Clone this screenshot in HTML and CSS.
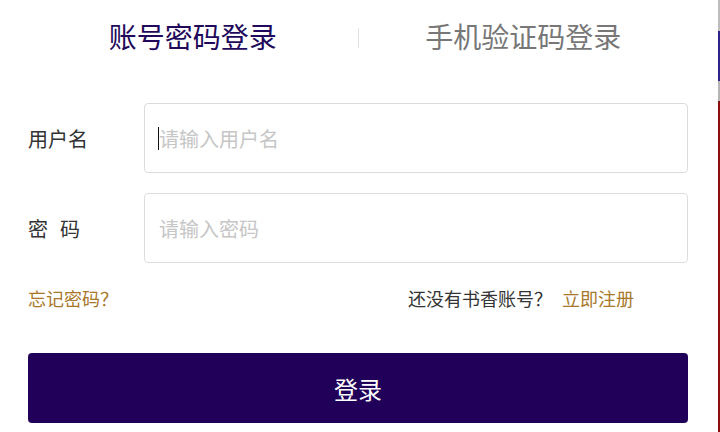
FILE: index.html
```html
<!DOCTYPE html>
<html lang="zh-CN">
<head>
<meta charset="utf-8">
<title>登录</title>
<link rel="stylesheet" href="styles.css">
</head>
<body>
<div class="page">
  <div class="main">
    <div class="tabs">
      <div class="tab tab-active">账号密码登录</div>
      <div class="tab-sep"></div>
      <div class="tab">手机验证码登录</div>
    </div>
    <div class="row">
      <label class="label">用户名</label>
      <div class="field">
        <input class="input" type="text" placeholder="请输入用户名">
        <span class="caret"></span>
      </div>
    </div>
    <div class="row">
      <label class="label"><span class="spaced">密</span>码</label>
      <div class="field">
        <input class="input" type="password" placeholder="请输入密码">
      </div>
    </div>
    <div class="links">
      <a class="link" href="#">忘记密码？</a>
      <div class="register">
        <span class="hint">还没有书香账号？</span>
        <a class="link" href="#">立即注册</a>
      </div>
    </div>
    <button class="submit" type="button">登录</button>
  </div>
  <div class="edge">
    <div class="edge-gray"></div>
    <div class="edge-blue"></div>
    <div class="edge-gray2"></div>
    <div class="edge-red"></div>
  </div>
</div>
</body>
</html>
```
FILE: styles.css
```css
* { box-sizing: border-box; }
html, body { margin: 0; padding: 0; background: #fff; }
body {
  font-family: "Noto Sans CJK SC", "Noto Sans", sans-serif;
  color: #333;
}
.page {
  display: flex;
  width: 720px;
  height: 432px;
  overflow: hidden;
}
.main {
  flex: 1;
  padding: 0 30px 0 28px;
}
.tabs {
  display: flex;
  align-items: center;
  height: 76px;
  padding-bottom: 4px;
}
.tab {
  flex: 1;
  text-align: center;
  font-size: 28px;
  line-height: 40px;
  color: #777;
}
.tab-active { color: #21085a; }
.tab-sep {
  width: 1px;
  height: 20px;
  margin-top: 4px;
  background: #e3e3e3;
}
.row {
  display: flex;
  align-items: center;
  height: 70px;
  margin-top: 27px;
}
.row + .row { margin-top: 20px; }
.label {
  width: 116px;
  font-size: 20px;
  color: #333;
}
.spaced {
  display: inline-block;
  margin-right: 12px;
}
.field {
  position: relative;
  flex: 1;
  height: 70px;
}
.input {
  width: 100%;
  height: 100%;
  border: 1px solid #dcdcdc;
  border-radius: 4px;
  padding: 0 14px;
  font-family: inherit;
  font-size: 20px;
  color: #333;
  outline: none;
  background: #fff;
}
.input::placeholder { color: #c6c6c6; }
.caret {
  position: absolute;
  left: 14px;
  top: 24px;
  width: 1px;
  height: 23px;
  background: #111;
}
.links {
  display: flex;
  align-items: center;
  justify-content: space-between;
  height: 30px;
  margin-top: 20px;
  font-size: 18px;
}
.link {
  color: #a8782a;
  text-decoration: none;
}
.register {
  display: flex;
  align-items: center;
  gap: 10px;
  margin-right: 54px;
}
.hint { color: #333; }
.submit {
  display: block;
  width: 100%;
  height: 70px;
  margin-top: 40px;
  border: none;
  border-radius: 4px;
  background: #200058;
  color: #fff;
  font-family: inherit;
  font-size: 24px;
}
.edge {
  width: 2px;
  display: flex;
  flex-direction: column;
}
.edge-gray { height: 31px; background: #bdbdbd; }
.edge-blue { height: 50px; background: #2c2488; }
.edge-gray2 { height: 20px; background: #b5b5b5; }
.edge-red { flex: 1; background: #8c1010; }
```
